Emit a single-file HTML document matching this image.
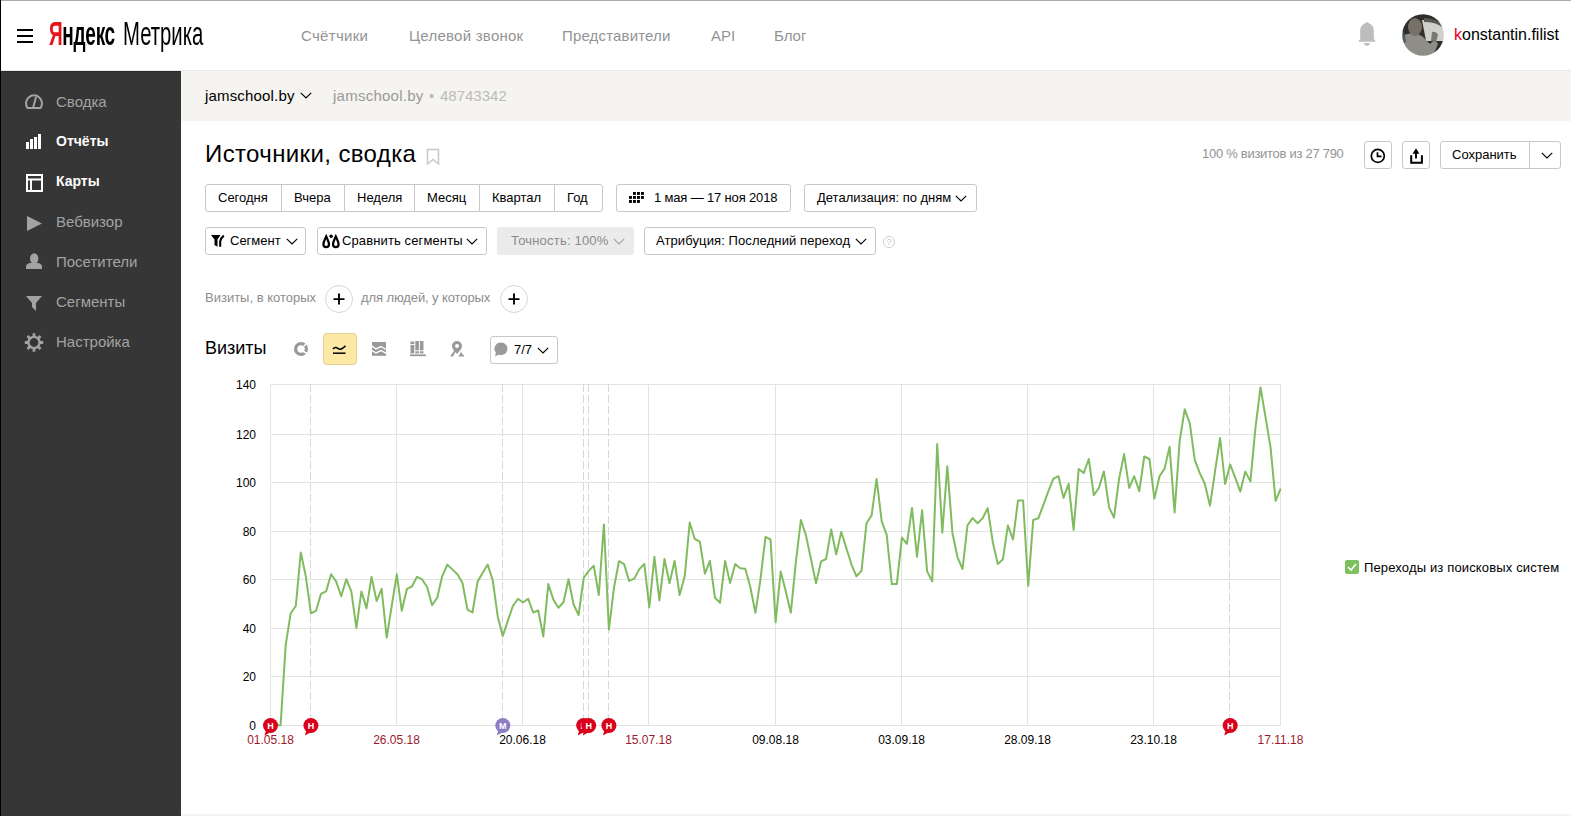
<!DOCTYPE html>
<html><head><meta charset="utf-8">
<style>
*{margin:0;padding:0;box-sizing:border-box}
html,body{width:1571px;height:816px;overflow:hidden;background:#fff;font-family:"Liberation Sans",sans-serif;color:#000}
body{position:relative}
.a{position:absolute;white-space:nowrap}
svg text{font-family:"Liberation Sans",sans-serif}
.nav{top:27px;font-size:15px;line-height:17px;color:#939393}
.side{left:56px;font-size:15px;line-height:17px;color:#a3a3a3}
.side.w{color:#fff;font-weight:bold;font-size:14px}
.btn{border:1px solid #c8c8c8;border-radius:3px;background:#fff;height:27px}
.bt{font-size:13px;line-height:15px;color:#000}
</style></head><body>
<!-- frame lines -->
<div class="a" style="left:0;top:0;width:1571px;height:1px;background:#a9a9a9"></div>
<div class="a" style="left:0;top:70px;width:1571px;height:1px;background:#e9e9e9"></div>

<!-- header -->
<div class="a" style="left:17px;top:29px;width:16px;height:2px;background:#000"></div>
<div class="a" style="left:17px;top:35px;width:16px;height:2px;background:#000"></div>
<div class="a" style="left:17px;top:41px;width:16px;height:2px;background:#000"></div>
<div class="a" id="logo1" style="left:49px;top:15px;font-size:33px;line-height:37px;transform-origin:0 0;transform:scaleX(0.576);font-weight:bold;letter-spacing:-0.5px"><span style="color:#e8141c">Я</span>ндекс</div>
<div class="a" id="logo2" style="left:123px;top:15px;font-size:33px;line-height:37px;transform-origin:0 0;transform:scaleX(0.615)">Метрика</div>

<div class="a nav" style="left:301px;letter-spacing:0.3px">Счётчики</div>
<div class="a nav" style="left:409px;letter-spacing:0.25px">Целевой звонок</div>
<div class="a nav" style="left:562px;letter-spacing:0.16px">Представители</div>
<div class="a nav" style="left:711px">API</div>
<div class="a nav" style="left:774px">Блог</div>

<svg class="a" style="left:1355px;top:21px" width="24" height="26" viewBox="0 0 24 26">
<path d="M12 1C13.3 2 14.5 2.6 15.5 3.2C18 4.5 18.8 7 18.8 10V17.8L20.8 20.7H3.2L5.2 17.8V10C5.2 7 6 4.5 8.5 3.2C9.5 2.6 10.7 2 12 1Z" fill="#bdbdbd"/>
<path d="M9 22H15C15 23.8 13.7 24.8 12 24.8S9 23.8 9 22Z" fill="#bdbdbd"/>
</svg>
<svg class="a" style="left:1402px;top:14px" width="42" height="42" viewBox="0 0 42 42"><defs><clipPath id="av"><circle cx="21" cy="21" r="20.8"/></clipPath></defs>
<filter id="avb"><feGaussianBlur stdDeviation="0.7"/></filter><g clip-path="url(#av)"><g filter="url(#avb)"><rect width="42" height="42" fill="#2e2d2a"/>
<path d="M20 6 Q32 5 42 14 V27 H24 Z" fill="#cfcfcc"/>
<path d="M22 4 Q34 4 42 12 V14 Q32 7 22 8Z" fill="#5a5a56"/>
<path d="M0 22 Q4 20 10 19 Q16 20 20 22 L28 30 Q32 26 34 27 L36 30 Q34 36 30 42 H0Z" fill="#8f8e86"/>
<ellipse cx="13" cy="13" rx="7" ry="9" fill="#757068"/>
<path d="M30 18 Q34 17 36 21 L34 28 L29 27Z" fill="#7a7670"/>
<path d="M0 14 Q3 20 4 28 L0 30Z" fill="#4c5c58"/>
</g></g></svg>
<div class="a" style="left:1454px;top:26px;font-size:16px;line-height:18px;color:#000"><span style="color:#e5001a">k</span>onstantin.filist</div>

<!-- sidebar -->
<div class="a" style="left:0;top:0;width:1px;height:816px;background:#000"></div>
<div class="a" style="left:1px;top:71px;width:180px;height:745px;background:#363636;border-top:1px solid #2a2a2a"></div>
<!-- icons -->
<svg class="a" style="left:0;top:71px" width="181" height="300">
 <g fill="none" stroke="#a3a3a3" stroke-width="2"><path d="M27.5 37 A8 8 0 1 1 40.5 37 Z"/><path d="M33 37 L36 26"/></g>
 <g fill="#fff"><rect x="26" y="71" width="3" height="7"/><rect x="30" y="68" width="3" height="10"/><rect x="34" y="66" width="3" height="12"/><rect x="38" y="63" width="3" height="15"/></g>
 <g fill="none" stroke="#fff" stroke-width="2"><rect x="27" y="104" width="15" height="16"/><path d="M27 108.5H42M31 108.5V120"/></g>
 <path d="M27 145 L42 152.5 L27 160 Z" fill="#a3a3a3"/>
 <g fill="#a3a3a3"><ellipse cx="34.2" cy="187.5" rx="4.2" ry="5.3"/><path d="M26 198 V195.5 Q26 193 30 192 L38 192 Q42 193 42 195.5 V198 Z"/></g>
 <path d="M26 225 H42 L36 232 V240 L32 236 V232 Z" fill="#a3a3a3"/>
 <g transform="translate(34,271.5)"><g stroke="#a3a3a3" stroke-width="2.8"><path d="M0 -9.2V-5M0 9.2V5M-9.2 0H-5M9.2 0H5M-6.5 -6.5L-3.5 -3.5M6.5 6.5L3.5 3.5M-6.5 6.5L-3.5 3.5M6.5 -6.5L3.5 -3.5"/></g><circle r="5.6" fill="none" stroke="#a3a3a3" stroke-width="2.4"/></g>
</svg>
<div class="a side" style="top:93px">Сводка</div>
<div class="a side w" style="top:133px">Отчёты</div>
<div class="a side w" style="top:173px">Карты</div>
<div class="a side" style="top:213px">Вебвизор</div>
<div class="a side" style="top:253px">Посетители</div>
<div class="a side" style="top:293px">Сегменты</div>
<div class="a side" style="top:333px">Настройка</div>

<!-- counter bar -->
<div class="a" style="left:181px;top:71px;width:1390px;height:50px;background:#f5f4f1"></div>
<div class="a" style="left:205px;top:87px;font-size:15px;line-height:17px;color:#000;letter-spacing:0.17px">jamschool.by</div>
<svg class="a" style="left:299.2px;top:91px" width="14" height="9"><path d="M1.8 1.8L7 7L12.2 1.8" fill="none" stroke="#000" stroke-width="1.15"/></svg>
<div class="a" style="left:333px;top:87px;font-size:15px;line-height:17px;color:#999;letter-spacing:0.25px">jamschool.by</div>
<div class="a" style="left:429px;top:87px;font-size:15px;line-height:17px;color:#bbb">•</div>
<div class="a" style="left:440px;top:87px;font-size:15px;line-height:17px;color:#bbb">48743342</div>

<!-- title -->
<div class="a" style="left:205px;top:140px;font-size:24px;line-height:28px;color:#000;letter-spacing:0.38px">Источники, сводка</div>
<svg class="a" style="left:426px;top:148px" width="15" height="18"><path d="M1.5 1.5H12.5V16L7 11.5L1.5 16Z" fill="none" stroke="#c8c8c8" stroke-width="1.5"/></svg>

<div class="a" style="left:1202px;top:146px;font-size:13px;line-height:15px;color:#939393;letter-spacing:-0.28px">100 % визитов из 27 790</div>
<div class="a btn" style="left:1364px;top:141px;width:28px;height:28px"></div>
<svg class="a" style="left:1368px;top:145px" width="20" height="20"><circle cx="9.8" cy="10.9" r="6.5" fill="none" stroke="#000" stroke-width="1.7"/><path d="M9.5 7.2V11.3H13.6" fill="none" stroke="#000" stroke-width="1.7"/></svg>
<div class="a btn" style="left:1402px;top:141px;width:28px;height:28px"></div>
<svg class="a" style="left:1406px;top:145px" width="20" height="20"><path d="M10 3.3L13.4 8.8H6.6Z" fill="#000"/><path d="M10 8V13.4" stroke="#000" stroke-width="1.9"/><path d="M5.2 10.2V17.7H15.9V10.2" fill="none" stroke="#000" stroke-width="2"/></svg>
<div class="a btn" style="left:1440px;top:141px;width:121px;height:28px"></div>
<div class="a" style="left:1529px;top:142px;width:1px;height:26px;background:#c8c8c8"></div>
<div class="a bt" style="left:1452px;top:147px">Сохранить</div>
<svg class="a" style="left:1539.7px;top:151px" width="14" height="9"><path d="M1.8 1.8L7 7L12.2 1.8" fill="none" stroke="#000" stroke-width="1.15"/></svg>

<!-- period buttons -->
<div class="a btn" style="left:205px;top:184px;width:398px;height:28px"></div>
<div class="a" style="left:281px;top:185px;width:1px;height:26px;background:#c8c8c8"></div>
<div class="a" style="left:344px;top:185px;width:1px;height:26px;background:#c8c8c8"></div>
<div class="a" style="left:414px;top:185px;width:1px;height:26px;background:#c8c8c8"></div>
<div class="a" style="left:479px;top:185px;width:1px;height:26px;background:#c8c8c8"></div>
<div class="a" style="left:554px;top:185px;width:1px;height:26px;background:#c8c8c8"></div>
<div class="a bt" style="left:218px;top:190px">Сегодня</div>
<div class="a bt" style="left:294px;top:190px">Вчера</div>
<div class="a bt" style="left:357px;top:190px">Неделя</div>
<div class="a bt" style="left:427px;top:190px">Месяц</div>
<div class="a bt" style="left:492px;top:190px">Квартал</div>
<div class="a bt" style="left:567px;top:190px">Год</div>

<div class="a btn" style="left:616px;top:184px;width:175px;height:28px"></div>
<svg class="a" style="left:628px;top:191px" width="18" height="14"><g fill="#000"><rect x="5" y="1" width="2.9" height="2.9"/><rect x="9" y="1" width="2.9" height="2.9"/><rect x="13" y="1" width="2.9" height="2.9"/><rect x="1" y="5" width="2.9" height="2.9"/><rect x="5" y="5" width="2.9" height="2.9"/><rect x="9" y="5" width="2.9" height="2.9"/><rect x="13" y="5" width="2.9" height="2.9"/><rect x="1" y="9" width="2.9" height="2.9"/><rect x="5" y="9" width="2.9" height="2.9"/><rect x="9" y="9" width="2.9" height="2.9"/></g></svg>
<div class="a bt" style="left:654px;top:190px;letter-spacing:-0.16px">1 мая — 17 ноя 2018</div>

<div class="a btn" style="left:804px;top:184px;width:173px;height:28px"></div>
<div class="a bt" style="left:817px;top:190px">Детализация: по дням</div>
<svg class="a" style="left:954px;top:194px" width="14" height="9"><path d="M1.8 1.8L7 7L12.2 1.8" fill="none" stroke="#000" stroke-width="1.15"/></svg>

<!-- row 2 -->
<div class="a btn" style="left:205px;top:227px;width:101px;height:28px"></div>
<svg class="a" style="left:211px;top:234px" width="15" height="14"><path d="M0 1H9.5L6.5 5.5V12.8L3.5 11V5.5Z" fill="#000"/><path d="M12.8 1.6Q9.6 4.2 9.2 7.5V12.8" fill="none" stroke="#000" stroke-width="2.1"/></svg>
<div class="a bt" style="left:230px;top:233px">Сегмент</div>
<svg class="a" style="left:284.5px;top:237px" width="14" height="9"><path d="M1.8 1.8L7 7L12.2 1.8" fill="none" stroke="#000" stroke-width="1.15"/></svg>

<div class="a btn" style="left:317px;top:227px;width:170px;height:28px"></div>
<svg class="a" style="left:322px;top:234px" width="18" height="15"><g fill="none" stroke="#000" stroke-width="2.2"><path d="M4.2 2.5C5.5 5.5 7 8 7 10.3A2.8 2.8 0 0 1 1.4 10.3C1.4 8 2.9 5.5 4.2 2.5Z"/><path d="M13.8 2.5C15.1 5.5 16.6 8 16.6 10.3A2.8 2.8 0 0 1 11 10.3C11 8 12.5 5.5 13.8 2.5Z"/></g><circle cx="9.1" cy="2.2" r="1.7" fill="#000"/></svg>
<div class="a bt" style="left:342px;top:233px;letter-spacing:0.12px">Сравнить сегменты</div>
<svg class="a" style="left:465.3px;top:237px" width="14" height="9"><path d="M1.8 1.8L7 7L12.2 1.8" fill="none" stroke="#000" stroke-width="1.15"/></svg>

<div class="a" style="left:497px;top:227px;width:137px;height:28px;background:#ebebeb;border-radius:3px"></div>
<div class="a bt" style="left:511px;top:233px;color:#8a8a8a;letter-spacing:0.2px">Точность: 100%</div>
<svg class="a" style="left:611.7px;top:237px" width="14" height="9"><path d="M1.8 1.8L7 7L12.2 1.8" fill="none" stroke="#a0a0a0" stroke-width="1.1"/></svg>

<div class="a btn" style="left:644px;top:227px;width:232px;height:28px"></div>
<div class="a bt" style="left:656px;top:233px;letter-spacing:0.1px">Атрибуция: Последний переход</div>
<svg class="a" style="left:854.1px;top:237px" width="14" height="9"><path d="M1.8 1.8L7 7L12.2 1.8" fill="none" stroke="#000" stroke-width="1.15"/></svg>
<svg class="a" style="left:882px;top:235px" width="14" height="14"><circle cx="7" cy="7" r="5.6" fill="none" stroke="#d0d0d0" stroke-width="1"/><text x="7" y="10.2" text-anchor="middle" font-size="9" fill="#c8c8c8">?</text></svg>

<!-- segment conditions -->
<div class="a" style="left:205px;top:290px;font-size:13px;line-height:15px;color:#8c8c8c">Визиты, в которых</div>
<div class="a" style="left:325px;top:285px;width:28px;height:28px;border:1px solid #d6d6d6;border-radius:50%"></div>
<svg class="a" style="left:325px;top:285px" width="28" height="28"><path d="M14 8.6V19.6M8.5 14.1H19.5" stroke="#000" stroke-width="1.9"/></svg>
<div class="a" style="left:361px;top:290px;font-size:13px;line-height:15px;color:#8c8c8c;letter-spacing:-0.1px">для людей, у которых</div>
<div class="a" style="left:500px;top:285px;width:28px;height:28px;border:1px solid #d6d6d6;border-radius:50%"></div>
<svg class="a" style="left:500px;top:285px" width="28" height="28"><path d="M14 8.6V19.6M8.5 14.1H19.5" stroke="#000" stroke-width="1.9"/></svg>

<!-- visits header -->
<div class="a" style="left:205px;top:338px;font-size:18px;line-height:20px;color:#000">Визиты</div>
<svg class="a" style="left:290px;top:338px" width="22" height="22"><circle cx="11" cy="11" r="5.4" fill="none" stroke="#999" stroke-width="3.3"/><path d="M14 8L18 4M13.5 13.5L18 16" stroke="#fff" stroke-width="1.5"/></svg>
<div class="a" style="left:323px;top:333px;width:34px;height:32px;background:#fde9a6;border:1px solid #e6cf8e;border-radius:4px"></div>
<svg class="a" style="left:330px;top:340px" width="20" height="18"><path d="M3 9C4.5 7 6.5 7 8 8.5C9.5 10 11.5 9.5 15.5 5.8" fill="none" stroke="#000" stroke-width="1.6"/><path d="M3 13.2H15.5" stroke="#000" stroke-width="1.5"/></svg>
<svg class="a" style="left:372px;top:342px" width="15" height="14"><rect x="0" y="0" width="14" height="13.8" fill="#999"/><path d="M-1 3.5L4 7L9 4.5L15 8M-1 8L4 11L9 8.5L15 11.8" fill="none" stroke="#fff" stroke-width="1.4"/></svg>
<svg class="a" style="left:410px;top:341px" width="17" height="16"><g fill="#999"><rect x="0.5" y="0.5" width="3.8" height="2.6"/><rect x="0.5" y="4" width="3.8" height="8.4"/><rect x="5.3" y="0" width="3.6" height="9.3"/><rect x="5.3" y="10.3" width="3.6" height="2.1"/><rect x="9.9" y="0" width="3.6" height="9.3"/><rect x="9.9" y="10.3" width="3.6" height="2.1"/><rect x="0" y="13.4" width="16" height="1.8"/></g></svg>
<svg class="a" style="left:449px;top:340px" width="17" height="17"><path d="M8 1A5 5 0 0 1 13 6C13 9 10 11.5 8 14C6 11.5 3 9 3 6A5 5 0 0 1 8 1Z" fill="#999"/><circle cx="8" cy="6" r="2" fill="#fff"/><path d="M1 16.5L5 11H7L4 16.5Z M9.5 16.5L12 12L15.5 16.5Z" fill="#999"/></svg>

<div class="a btn" style="left:490px;top:336px;width:68px;height:28px"></div>
<svg class="a" style="left:493px;top:342px" width="16" height="16"><path d="M8 0.5A6.5 6.3 0 1 1 5.5 12.6L2.2 14.8L2.8 10.6A6.5 6.3 0 0 1 8 0.5Z" fill="#9a9a9a"/></svg>
<div class="a bt" style="left:514px;top:342px">7/7</div>
<svg class="a" style="left:535.7px;top:346px" width="14" height="9"><path d="M1.8 1.8L7 7L12.2 1.8" fill="none" stroke="#000" stroke-width="1.15"/></svg>

<svg class="a" style="left:0;top:0" width="1571" height="816">
<line x1="270" y1="725.5" x2="1281" y2="725.5" stroke="#e3e3e3" stroke-width="1"/>
<text x="256" y="730.0" text-anchor="end" font-size="12" fill="#000">0</text>
<line x1="270" y1="676.5" x2="1281" y2="676.5" stroke="#e3e3e3" stroke-width="1"/>
<text x="256" y="681.0" text-anchor="end" font-size="12" fill="#000">20</text>
<line x1="270" y1="628.5" x2="1281" y2="628.5" stroke="#e3e3e3" stroke-width="1"/>
<text x="256" y="633.0" text-anchor="end" font-size="12" fill="#000">40</text>
<line x1="270" y1="579.5" x2="1281" y2="579.5" stroke="#e3e3e3" stroke-width="1"/>
<text x="256" y="584.0" text-anchor="end" font-size="12" fill="#000">60</text>
<line x1="270" y1="531.5" x2="1281" y2="531.5" stroke="#e3e3e3" stroke-width="1"/>
<text x="256" y="536.0" text-anchor="end" font-size="12" fill="#000">80</text>
<line x1="270" y1="482.5" x2="1281" y2="482.5" stroke="#e3e3e3" stroke-width="1"/>
<text x="256" y="487.0" text-anchor="end" font-size="12" fill="#000">100</text>
<line x1="270" y1="434.5" x2="1281" y2="434.5" stroke="#e3e3e3" stroke-width="1"/>
<text x="256" y="439.0" text-anchor="end" font-size="12" fill="#000">120</text>
<line x1="270" y1="384.5" x2="1281" y2="384.5" stroke="#e3e3e3" stroke-width="1"/>
<text x="256" y="389.0" text-anchor="end" font-size="12" fill="#000">140</text>
<line x1="270.5" y1="384" x2="270.5" y2="725" stroke="#e3e3e3" stroke-width="1"/>
<text x="270.5" y="744" text-anchor="middle" font-size="12" fill="#9b1a2e">01.05.18</text>
<line x1="396.5" y1="384" x2="396.5" y2="725" stroke="#e3e3e3" stroke-width="1"/>
<text x="396.5" y="744" text-anchor="middle" font-size="12" fill="#9b1a2e">26.05.18</text>
<line x1="522.5" y1="384" x2="522.5" y2="725" stroke="#e3e3e3" stroke-width="1"/>
<text x="522.5" y="744" text-anchor="middle" font-size="12" fill="#000">20.06.18</text>
<line x1="648.5" y1="384" x2="648.5" y2="725" stroke="#e3e3e3" stroke-width="1"/>
<text x="648.5" y="744" text-anchor="middle" font-size="12" fill="#9b1a2e">15.07.18</text>
<line x1="775.5" y1="384" x2="775.5" y2="725" stroke="#e3e3e3" stroke-width="1"/>
<text x="775.5" y="744" text-anchor="middle" font-size="12" fill="#000">09.08.18</text>
<line x1="901.5" y1="384" x2="901.5" y2="725" stroke="#e3e3e3" stroke-width="1"/>
<text x="901.5" y="744" text-anchor="middle" font-size="12" fill="#000">03.09.18</text>
<line x1="1027.5" y1="384" x2="1027.5" y2="725" stroke="#e3e3e3" stroke-width="1"/>
<text x="1027.5" y="744" text-anchor="middle" font-size="12" fill="#000">28.09.18</text>
<line x1="1153.5" y1="384" x2="1153.5" y2="725" stroke="#e3e3e3" stroke-width="1"/>
<text x="1153.5" y="744" text-anchor="middle" font-size="12" fill="#000">23.10.18</text>
<line x1="1280.5" y1="384" x2="1280.5" y2="725" stroke="#e3e3e3" stroke-width="1"/>
<text x="1280.5" y="744" text-anchor="middle" font-size="12" fill="#9b1a2e">17.11.18</text>
<line x1="310.5" y1="384" x2="310.5" y2="718" stroke="#d8d8d8" stroke-width="1" stroke-dasharray="8,3"/>
<line x1="502.5" y1="384" x2="502.5" y2="718" stroke="#d8d8d8" stroke-width="1" stroke-dasharray="8,3"/>
<line x1="583.5" y1="384" x2="583.5" y2="718" stroke="#d8d8d8" stroke-width="1" stroke-dasharray="8,3"/>
<line x1="588.5" y1="384" x2="588.5" y2="718" stroke="#d8d8d8" stroke-width="1" stroke-dasharray="8,3"/>
<line x1="608.5" y1="384" x2="608.5" y2="718" stroke="#d8d8d8" stroke-width="1" stroke-dasharray="8,3"/>
<line x1="1229.5" y1="384" x2="1229.5" y2="718" stroke="#d8d8d8" stroke-width="1" stroke-dasharray="8,3"/>
<polyline points="270.5,725.2 275.6,725.2 280.6,725.2 285.7,644.9 290.7,613.3 295.8,606.0 300.8,552.4 305.9,576.8 310.9,613.3 316.0,610.8 321.0,593.8 326.1,591.4 331.1,574.3 336.2,581.6 341.2,596.2 346.3,579.2 351.3,591.4 356.4,627.9 361.4,591.4 366.5,608.4 371.5,576.8 376.6,601.1 381.6,588.9 386.7,637.6 391.7,606.0 396.8,574.3 401.8,610.8 406.9,588.9 411.9,586.5 417.0,576.8 422.0,579.2 427.1,587.0 432.1,605.2 437.2,597.7 442.2,576.3 447.3,564.6 452.3,569.4 457.4,574.3 462.4,582.8 467.5,609.6 472.5,612.5 477.6,581.6 482.6,572.9 487.7,564.6 492.7,580.2 497.8,616.9 502.8,635.9 507.9,620.6 512.9,606.0 518.0,598.7 523.0,602.5 528.1,598.7 533.2,612.5 538.2,610.3 543.3,636.4 548.3,584.1 553.4,599.6 558.4,607.7 563.5,602.3 568.5,579.2 573.6,604.5 578.6,615.0 583.7,578.0 588.7,570.9 593.8,565.8 598.8,595.0 603.9,524.4 608.9,629.6 614.0,587.5 619.0,561.2 624.1,564.1 629.1,580.9 634.2,578.7 639.2,569.4 644.3,563.9 649.3,607.4 654.4,556.8 659.4,600.4 664.5,559.0 669.5,583.3 674.6,560.9 679.6,595.0 684.7,576.3 689.7,522.5 694.8,539.0 699.8,541.7 704.9,573.6 709.9,560.9 715.0,597.7 720.0,602.8 725.1,560.9 730.1,583.1 735.2,564.1 740.2,568.2 745.3,568.7 750.3,587.0 755.4,612.8 760.4,579.9 765.5,536.8 770.5,539.5 775.6,622.3 780.7,571.4 785.7,591.1 790.8,612.8 795.8,562.6 800.9,520.0 805.9,535.1 811.0,559.2 816.0,583.3 821.1,561.4 826.1,559.0 831.2,529.5 836.2,554.4 841.3,532.0 846.3,548.0 851.4,564.3 856.4,576.3 861.5,570.9 866.5,523.2 871.6,515.4 876.6,478.9 881.7,521.3 886.7,534.9 891.8,584.1 896.8,584.1 901.9,537.6 906.9,543.9 912.0,508.1 917.0,556.8 922.1,510.3 927.1,571.4 932.2,581.4 937.2,444.1 942.3,532.7 947.3,466.3 952.4,532.7 957.4,556.8 962.5,569.0 967.5,525.4 972.6,518.1 977.6,523.2 982.7,518.1 987.7,508.1 992.8,542.2 997.8,564.1 1002.9,559.2 1007.9,525.4 1013.0,539.5 1018.0,500.6 1023.1,500.6 1028.2,585.8 1033.2,520.0 1038.3,518.3 1043.3,505.2 1048.4,491.1 1053.4,478.7 1058.5,476.2 1063.5,497.9 1068.6,483.8 1073.6,529.8 1078.7,468.9 1083.7,473.1 1088.8,459.0 1093.8,495.2 1098.9,487.9 1103.9,471.4 1109.0,507.1 1114.0,517.6 1119.1,478.7 1124.1,454.1 1129.2,487.9 1134.2,476.2 1139.3,491.1 1144.3,456.5 1149.4,459.0 1154.4,498.6 1159.5,476.2 1164.5,468.9 1169.6,446.8 1174.6,512.5 1179.7,440.7 1184.7,409.3 1189.8,423.4 1194.8,460.2 1199.9,473.3 1204.9,484.0 1210.0,505.7 1215.0,471.6 1220.1,438.0 1225.1,484.0 1230.2,464.6 1235.2,477.7 1240.3,491.6 1245.3,471.6 1250.4,481.4 1255.4,428.3 1260.5,387.4 1265.5,416.9 1270.6,447.8 1275.6,500.8 1280.7,488.7" fill="none" stroke="#80bb60" stroke-width="2" stroke-linejoin="round"/>
<g transform="translate(270.5,725.5)"><path d="M-4.5,5 L-6,10 L-0.5,7 Z" fill="#d9001b"/><circle r="7.5" fill="#d9001b"/><text y="3.6" text-anchor="middle" font-size="9" font-weight="bold" fill="#fff">Н</text></g>
<g transform="translate(310.9,725.5)"><path d="M-4.5,5 L-6,10 L-0.5,7 Z" fill="#d9001b"/><circle r="7.5" fill="#d9001b"/><text y="3.6" text-anchor="middle" font-size="9" font-weight="bold" fill="#fff">Н</text></g>
<g transform="translate(583.7,725.5)"><path d="M-4.5,5 L-6,10 L-0.5,7 Z" fill="#d9001b"/><circle r="7.5" fill="#d9001b"/><text y="3.6" text-anchor="middle" font-size="9" font-weight="bold" fill="#fff">Н</text></g>
<g transform="translate(588.7,725.5)"><path d="M-4.5,5 L-6,10 L-0.5,7 Z" fill="#d9001b"/><circle r="7.5" fill="#d9001b"/><text y="3.6" text-anchor="middle" font-size="9" font-weight="bold" fill="#fff">Н</text></g>
<g transform="translate(608.9,725.5)"><path d="M-4.5,5 L-6,10 L-0.5,7 Z" fill="#d9001b"/><circle r="7.5" fill="#d9001b"/><text y="3.6" text-anchor="middle" font-size="9" font-weight="bold" fill="#fff">Н</text></g>
<g transform="translate(1230.2,725.5)"><path d="M-4.5,5 L-6,10 L-0.5,7 Z" fill="#d9001b"/><circle r="7.5" fill="#d9001b"/><text y="3.6" text-anchor="middle" font-size="9" font-weight="bold" fill="#fff">Н</text></g>
<g transform="translate(502.8,725.5)"><path d="M-4.5,5 L-6,10 L-0.5,7 Z" fill="#8c7cc6"/><circle r="7.5" fill="#8c7cc6"/><text y="3.6" text-anchor="middle" font-size="9" font-weight="bold" fill="#fff">М</text></g>
</svg>

<!-- legend -->
<div class="a" style="left:1345px;top:560px;width:14px;height:14px;background:#7dc05e;border-radius:2px"></div>
<svg class="a" style="left:1345px;top:560px" width="14" height="14"><path d="M3 7.2L6 10L11 4" fill="none" stroke="#fff" stroke-width="1.7"/></svg>
<div class="a" style="left:1364px;top:560px;font-size:13px;line-height:15px;color:#000;letter-spacing:0.15px">Переходы из поисковых систем</div>

<div class="a" style="left:181px;top:813px;width:1390px;height:3px;background:linear-gradient(#fff,#f0f0f0)"></div>
</body></html>
